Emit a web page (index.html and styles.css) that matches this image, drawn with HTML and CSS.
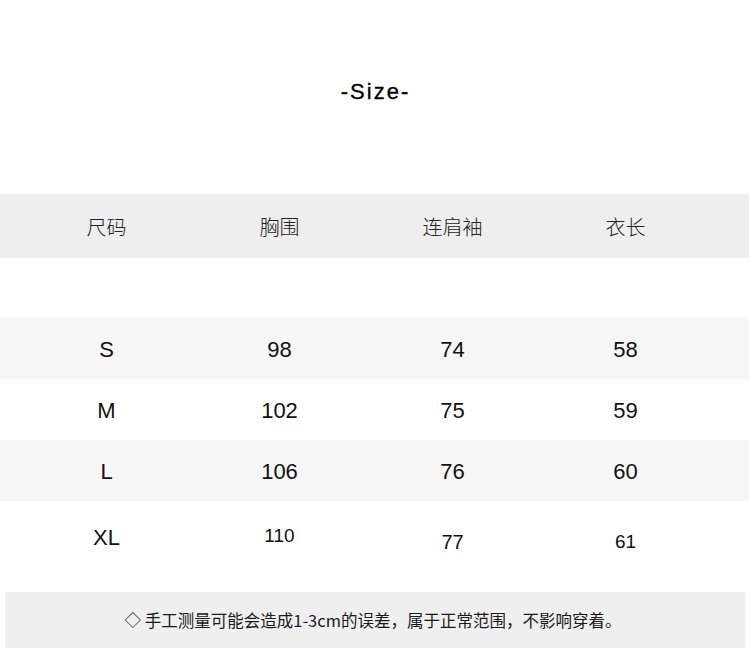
FILE: index.html
```html
<!DOCTYPE html>
<html lang="zh">
<head>
<meta charset="utf-8">
<link rel="stylesheet" href="styles.css">
</head>
<body>
<div class="page">
  <h1 class="title">-Size-</h1>
  <div class="row head">
    <div class="cell">尺码</div>
    <div class="cell">胸围</div>
    <div class="cell">连肩袖</div>
    <div class="cell">衣长</div>
  </div>
  <div class="spacer"></div>
  <div class="row data grey">
    <div class="cell">S</div>
    <div class="cell">98</div>
    <div class="cell">74</div>
    <div class="cell">58</div>
  </div>
  <div class="row data">
    <div class="cell">M</div>
    <div class="cell">102</div>
    <div class="cell">75</div>
    <div class="cell">59</div>
  </div>
  <div class="row data grey">
    <div class="cell">L</div>
    <div class="cell">106</div>
    <div class="cell">76</div>
    <div class="cell">60</div>
  </div>
  <div class="row data xl">
    <div class="cell">XL</div>
    <div class="cell small">110</div>
    <div class="cell low">77</div>
    <div class="cell small low">61</div>
  </div>
  <div class="note">◇ 手工测量可能会造成1-3cm的误差，属于正常范围，不影响穿着。</div>
</div>
</body>
</html>
```
FILE: styles.css
```css
html, body {
  margin: 0;
  padding: 0;
  background: #ffffff;
}
.page {
  width: 749px;
  height: 652px;
  overflow: hidden;
  font-family: "Liberation Sans", "Noto Sans CJK SC", sans-serif;
  color: #111;
}
.title {
  margin: 0;
  padding-top: 78px;
  height: 194px;
  box-sizing: border-box;
  text-align: center;
  font-size: 22px;
  font-weight: normal;
  letter-spacing: 2px;
  line-height: 28px;
  padding-left: 2px;
  color: #000;
  -webkit-text-stroke: 0.3px #000;
}
.row {
  display: grid;
  grid-template-columns: repeat(4, 173px);
  padding-left: 20px;
  align-items: center;
}
.cell {
  text-align: center;
}
.head {
  height: 64px;
  background: #eeeeee;
  font-family: "Noto Sans CJK SC", sans-serif;
  font-size: 20px;
  font-weight: 300;
  color: #222;
}
.spacer {
  height: 60px;
}
.data {
  height: 61px;
  padding-top: 3px;
  box-sizing: border-box;
  font-family: "Liberation Sans", sans-serif;
  font-size: 22px;
  color: #111;
}
.data.grey {
  background: #f6f6f6;
}
.data.xl {
  height: 73px;
  align-items: start;
  padding-top: 24px;
}
.cell.small {
  font-size: 19px;
}
.cell.low {
  margin-top: 6px;
  font-size: 20px;
}
.cell.small.low {
  font-size: 19px;
}
.note {
  margin: 18px 4px 0 5px;
  height: 56px;
  background: #efefef;
  display: flex;
  align-items: center;
  justify-content: center;
  font-family: "Noto Sans CJK SC", sans-serif;
  font-size: 16.5px;
  font-weight: 400;
  color: #1a1a1a;
  padding-right: 4px;
}
```
